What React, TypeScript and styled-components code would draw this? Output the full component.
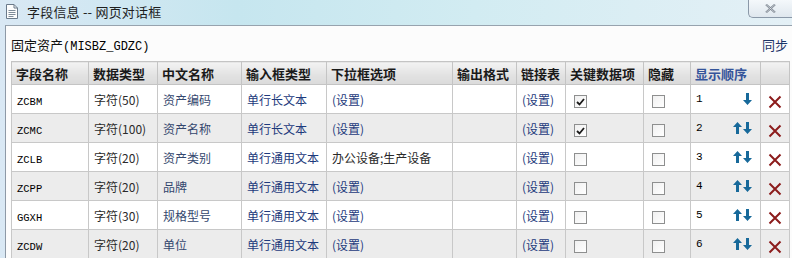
import React from 'react';
import styled, { createGlobalStyle } from 'styled-components';

const GlobalStyle = createGlobalStyle`
  html, body {
    margin: 0;
    padding: 0;
    background: #ffffff;
  }
  body {
    font-family: "Noto Sans CJK SC", "Liberation Sans", sans-serif;
  }
`;

const Window = styled.div`
  width: 792px;
  height: 258px;
  overflow: hidden;
  display: flex;
  flex-direction: column;
  background: linear-gradient(90deg, #d9e8f4 0%, #c6e6ef 30%, #d2ecf2 60%, #e4f0f6 100%);
`;

const TitleBar = styled.div`
  height: 25px;
  display: flex;
  align-items: flex-start;
  flex-shrink: 0;
`;

const TitleIcon = styled.svg`
  margin: 4px 0 0 6px;
  flex-shrink: 0;
`;

const TitleText = styled.div`
  margin: 3px 0 0 9px;
  font-size: 13px;
  line-height: 17px;
  color: #1e1e1e;
  letter-spacing: 0.2px;
`;

const CloseButton = styled.div`
  margin-left: auto;
  width: 43px;
  height: 17px;
  border: 1px solid #8a98a8;
  border-top: none;
  border-right: none;
  border-radius: 0 0 0 5px;
  background: linear-gradient(180deg, #f4f8fb 0%, #dfe7ee 100%);
  display: flex;
  align-items: center;
  justify-content: center;
`;

const Body = styled.div`
  flex: 1;
  margin-left: 5px;
  border-left: 1px solid #8d99a6;
  border-top: 1px solid #97a3ae;
  background: #fcfcfc;
  padding: 8px 4px 0 5px;
  display: flex;
  flex-direction: column;
`;

const InfoRow = styled.div`
  display: flex;
  justify-content: space-between;
  align-items: center;
  height: 20px;
  margin-bottom: 7px;
`;

const TableName = styled.div`
  font-size: 13px;
  color: #111;
  display: flex;
  align-items: baseline;
`;

const Code = styled.span<{ size?: number }>`
  font-family: "Liberation Mono", monospace;
  font-size: ${(p) => p.size ?? 11}px;
  color: #000;
`;

const SyncLink = styled.a`
  font-size: 13px;
  color: #1c3568;
  text-decoration: none;
`;

const Grid = styled.table`
  border-collapse: collapse;
  table-layout: fixed;
  width: 778px;
`;

const HeadCell = styled.th<{ blue?: boolean }>`
  height: 22px;
  padding: 0 0 0 4px;
  text-align: left;
  font-size: 13px;
  font-weight: bold;
  color: ${(p) => (p.blue ? '#34549a' : '#1a1a1a')};
  background: linear-gradient(180deg, #f3f3f3 0%, #e3e3e3 55%, #dadada 100%);
  border: 1px solid #c4c4c4;
  white-space: nowrap;
  overflow: hidden;
`;

const Row = styled.tr<{ shaded?: boolean }>`
  background: ${(p) => (p.shaded ? '#ececec' : '#ffffff')};
`;

const Cell = styled.td<{ tone?: 'plain' | 'link' | 'name' }>`
  height: 28px;
  padding: 0 0 0 5px;
  font-size: 12px;
  white-space: nowrap;
  overflow: hidden;
  border: 1px solid #c8c8c8;
  color: ${(p) =>
    p.tone === 'link' ? '#1d3a7c' : p.tone === 'name' ? '#34476e' : '#2a2a2a'};
`;

const CheckCell = styled.td`
  height: 28px;
  padding: 0 0 0 8px;
  border: 1px solid #c8c8c8;
`;

const Box = styled.span`
  display: inline-flex;
  align-items: center;
  justify-content: center;
  width: 11px;
  height: 11px;
  border: 1px solid #8e8f8f;
  background: linear-gradient(135deg, #f0f0f0 0%, #ffffff 100%);
  vertical-align: middle;
`;

const OrderCell = styled.td`
  height: 28px;
  padding: 0 8px 0 5px;
  border: 1px solid #c8c8c8;
`;

const OrderInner = styled.div`
  display: flex;
  align-items: center;
  gap: 1px;
`;

const OrderNum = styled.span`
  font-family: "Liberation Mono", monospace;
  font-size: 11px;
  color: #000;
  margin-right: auto;
`;

const DeleteCell = styled.td`
  height: 28px;
  padding: 0;
  border: 1px solid #c8c8c8;
  text-align: center;
`;

const Arrow = ({ up }: { up?: boolean }) => (
  <svg width="9" height="12" viewBox="0 0 9 12">
    <path
      d={up ? 'M4.5 0 L9 5 L6 5 L6 12 L3 12 L3 5 L0 5 Z' : 'M3 0 L6 0 L6 7 L9 7 L4.5 12 L0 7 L3 7 Z'}
      fill="#17699a"
    />
  </svg>
);

const CheckMark = () => (
  <svg width="9" height="8" viewBox="0 0 9 8">
    <path d="M1 4 L3.5 6.5 L8 1" stroke="#1a1a1a" strokeWidth="1.8" fill="none" />
  </svg>
);

const Cross = () => (
  <svg width="14" height="14" viewBox="0 0 14 14" style={{ verticalAlign: 'middle' }}>
    <path d="M1.5 1.5 L12.5 12.5 M12.5 1.5 L1.5 12.5" stroke="#8c1c1c" strokeWidth="2" />
  </svg>
);

type Field = {
  code: string;
  type: string;
  name: string;
  input: string;
  options: string;
  key: boolean;
};

const fields: Field[] = [
  { code: 'ZCBM', type: '字符(50)', name: '资产编码', input: '单行长文本', options: '(设置)', key: true },
  { code: 'ZCMC', type: '字符(100)', name: '资产名称', input: '单行长文本', options: '(设置)', key: true },
  { code: 'ZCLB', type: '字符(20)', name: '资产类别', input: '单行通用文本', options: '办公设备;生产设备', key: false },
  { code: 'ZCPP', type: '字符(20)', name: '品牌', input: '单行通用文本', options: '(设置)', key: false },
  { code: 'GGXH', type: '字符(30)', name: '规格型号', input: '单行通用文本', options: '(设置)', key: false },
  { code: 'ZCDW', type: '字符(20)', name: '单位', input: '单行通用文本', options: '(设置)', key: false },
];

const widths = [77, 69, 84, 85, 126, 64, 49, 78, 47, 70, 29];
const headers = ['字段名称', '数据类型', '中文名称', '输入框类型', '下拉框选项', '输出格式', '链接表', '关键数据项', '隐藏', '显示顺序', ''];

export default function App() {
  return (
    <>
      <GlobalStyle />
      <Window>
        <TitleBar>
          <TitleIcon width="12" height="15" viewBox="0 0 12 15">
            <path d="M0.5 0.5 H8 L11.5 4 V14.5 H0.5 Z" fill="#fdfdfd" stroke="#6b7a8a" />
            <path d="M8 0.5 V4 H11.5" fill="none" stroke="#6b7a8a" />
            <path d="M2.5 6.5 H9.5 M2.5 8.5 H9.5 M2.5 10.5 H9.5 M2.5 12.5 H7.5" stroke="#7f8c99" />
          </TitleIcon>
          <TitleText>字段信息 -- 网页对话框</TitleText>
          <CloseButton>
            <svg width="11" height="9" viewBox="0 0 11 9">
              <path d="M1 0.5 L10 8.5 M10 0.5 L1 8.5" stroke="#7c8590" strokeWidth="2" />
              <path d="M1 0.5 L10 8.5 M10 0.5 L1 8.5" stroke="#eef2f5" strokeWidth="0.6" />
            </svg>
          </CloseButton>
        </TitleBar>
        <Body>
          <InfoRow>
            <TableName>
              固定资产<Code size={12}>(MISBZ_GDZC)</Code>
            </TableName>
            <SyncLink>同步</SyncLink>
          </InfoRow>
          <Grid>
            <colgroup>
              {widths.map((w, i) => (
                <col key={i} style={{ width: w }} />
              ))}
            </colgroup>
            <thead>
              <tr>
                {headers.map((h, i) => (
                  <HeadCell key={i} blue={h === '显示顺序'}>
                    {h}
                  </HeadCell>
                ))}
              </tr>
            </thead>
            <tbody>
              {fields.map((f, i) => (
                <Row key={f.code} shaded={i % 2 === 1}>
                  <Cell>
                    <Code size={10.5}>{f.code}</Code>
                  </Cell>
                  <Cell>{f.type}</Cell>
                  <Cell tone="name">{f.name}</Cell>
                  <Cell tone="link">{f.input}</Cell>
                  <Cell tone={f.options === '(设置)' ? 'link' : 'plain'}>{f.options}</Cell>
                  <Cell />
                  <Cell tone="link">(设置)</Cell>
                  <CheckCell>
                    <Box>{f.key && <CheckMark />}</Box>
                  </CheckCell>
                  <CheckCell>
                    <Box />
                  </CheckCell>
                  <OrderCell>
                    <OrderInner>
                      <OrderNum>{i + 1}</OrderNum>
                      {i > 0 && <Arrow up />}
                      <Arrow />
                    </OrderInner>
                  </OrderCell>
                  <DeleteCell>
                    <Cross />
                  </DeleteCell>
                </Row>
              ))}
            </tbody>
          </Grid>
        </Body>
      </Window>
    </>
  );
}
